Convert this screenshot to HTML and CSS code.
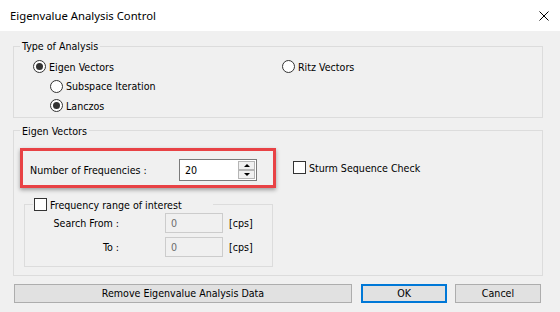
FILE: index.html
```html
<!DOCTYPE html>
<html lang="en">
<head>
<meta charset="UTF-8">
<title>Eigenvalue Analysis Control</title>
<link rel="stylesheet" href="styles.css">
</head>
<body>

<div class="dialog">
  <div class="titlebar">
    <span class="title">Eigenvalue Analysis Control</span>
    <svg class="close" width="10" height="10" viewBox="0 0 10 10">
      <path d="M0.5 0.5 L9.5 9.5 M9.5 0.5 L0.5 9.5" stroke="#000" stroke-width="1" fill="none"/>
    </svg>
  </div>

  <div class="content">

    <fieldset class="group type-group">
      <legend>Type of Analysis</legend>
      <div class="type-grid">
        <div class="opt"><span class="radio checked"></span>Eigen Vectors</div>
        <div class="opt"><span class="radio"></span>Ritz Vectors</div>
        <div class="opt sub"><span class="radio"></span>Subspace Iteration</div>
        <div class="opt sub"><span class="radio checked"></span>Lanczos</div>
      </div>
    </fieldset>

    <fieldset class="group eigen-group">
      <legend>Eigen Vectors</legend>

      <div class="freq-row">
        <div class="highlight">
          <span>Number of Frequencies :</span>
          <div class="spin">
            <div class="spin-field">20</div>
            <div class="spin-btns">
              <div class="spin-btn"><span class="arrow up"></span></div>
              <div class="spin-btn"><span class="arrow down"></span></div>
            </div>
          </div>
        </div>
        <div class="opt"><span class="check"></span>Sturm Sequence Check</div>
      </div>

      <fieldset class="group range-group">
        <legend><span class="check"></span>Frequency range of interest</legend>
        <div class="range-grid">
          <span class="range-label">Search From :</span>
          <div class="field disabled">0</div>
          <span class="unit">[cps]</span>
          <span class="range-label">To :</span>
          <div class="field disabled">0</div>
          <span class="unit">[cps]</span>
        </div>
      </fieldset>
    </fieldset>

    <div class="buttons">
      <button class="btn remove">Remove Eigenvalue Analysis Data</button>
      <button class="btn ok">OK</button>
      <button class="btn cancel">Cancel</button>
    </div>

  </div>
</div>

</body>
</html>
```

FILE: styles.css
```css
body {
  margin: 0;
  padding: 0;
  background-color: #f0f0f0;
  font-family: 'DejaVu Sans Condensed', 'DejaVu Sans', sans-serif;
  font-size: 10.6px;
  color: #000;
}

.dialog {
  width: 560px;
  height: 312px;
  overflow: hidden;
}

.titlebar {
  height: 31px;
  background-color: #fff;
  display: flex;
  align-items: center;
  justify-content: space-between;
  padding: 0 11px 0 10px;
}

.title {
  font-family: 'Noto Sans', sans-serif;
  font-size: 11.3px;
}

.content {
  padding: 8px 17px 0 13px;
}

.group {
  margin: 0;
  padding: 0;
  border: 1px solid #dcdcdc;
  min-width: 0;
}

.group legend {
  margin-left: 6px;
  padding: 0 2px;
  line-height: 14px;
}

.type-grid {
  display: grid;
  grid-template-columns: 249px auto;
  grid-auto-rows: 19.5px;
  padding: 4px 0 1px 19px;
}

.opt {
  display: flex;
  align-items: center;
  gap: 3px;
}

.opt.sub {
  grid-column: 1;
  padding-left: 17px;
}

.radio {
  width: 11px;
  height: 11px;
  border: 1px solid #333;
  border-radius: 50%;
  background-color: #fff;
  display: flex;
  align-items: center;
  justify-content: center;
}

.radio.checked::after {
  content: '';
  width: 7px;
  height: 7px;
  border-radius: 50%;
  background-color: #333;
}

.check {
  width: 11px;
  height: 11px;
  border: 1px solid #333;
  background-color: #fff;
  display: inline-block;
}

.eigen-group {
  margin-top: 6px;
  padding-bottom: 8px;
}

.freq-row {
  display: flex;
  align-items: center;
  gap: 17px;
  margin: 10px 0 0 6px;
}

.highlight {
  width: 256px;
  box-sizing: border-box;
  border: 3px solid #e84245;
  padding: 8px 16px 4px 7px;
  display: flex;
  align-items: center;
  justify-content: space-between;
  box-shadow: 0 2px 4px rgba(0,0,0,0.35);
}

.spin {
  display: flex;
  width: 78px;
  height: 22px;
  box-sizing: border-box;
  border: 1px solid #7a7a7a;
  background-color: #fff;
}

.spin-field {
  flex: 1;
  padding-left: 5px;
  line-height: 20px;
}

.spin-btns {
  width: 17px;
  display: flex;
  flex-direction: column;
  justify-content: space-between;
  padding: 1px 1px 1px 0;
}

.spin-btn {
  height: 8px;
  border: 1px solid #b5b5b5;
  background-color: #f0f0f0;
  display: flex;
  align-items: center;
  justify-content: center;
}

.arrow {
  width: 0;
  height: 0;
  border-left: 3px solid transparent;
  border-right: 3px solid transparent;
}

.arrow.up {
  border-bottom: 3px solid #000;
}

.arrow.down {
  border-top: 3px solid #000;
}

.range-group {
  margin: 10px 0 0 10px;
  width: 249px;
  box-sizing: border-box;
  padding-bottom: 9px;
}

.range-group legend {
  margin-left: 8px;
  padding: 0 0 0 1px;
  width: 179px;
  display: flex;
  align-items: center;
  gap: 3px;
}

.range-grid {
  display: grid;
  grid-template-columns: 94px 46px 58px auto;
  grid-auto-rows: 20px;
  row-gap: 4px;
  align-items: center;
  padding-top: 1px;
}

.range-label {
  grid-column: 1;
  justify-self: end;
  white-space: nowrap;
}

.range-grid .field {
  grid-column: 3;
}

.unit {
  padding-left: 6px;
}

.field {
  height: 20px;
  box-sizing: border-box;
  border: 1px solid #ccc;
  padding-left: 5px;
  line-height: 18px;
}

.field.disabled {
  background-color: #f0f0f0;
  color: #6d6d6d;
}

.buttons {
  display: flex;
  margin: 8px 0 0 1px;
}

.btn {
  height: 19px;
  box-sizing: border-box;
  border: 1px solid #adadad;
  background-color: #e1e1e1;
  font-family: inherit;
  font-size: 10.6px;
  padding: 0;
  color: #000;
}

.btn.remove {
  width: 338px;
}

.btn.ok {
  width: 86px;
  margin-left: 9px;
  border: 2px solid #0078d7;
}

.btn.cancel {
  width: 86px;
  margin-left: 8px;
}
```
